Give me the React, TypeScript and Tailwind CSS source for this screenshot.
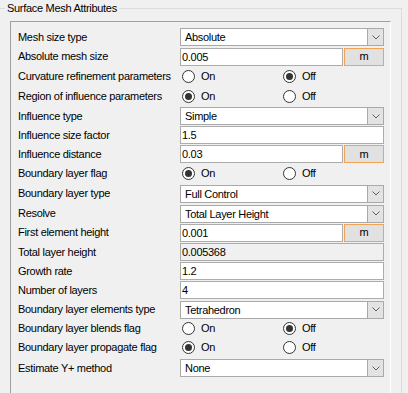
import React from 'react';

type Kind = 'select' | 'unit' | 'text' | 'readonly' | 'radio';

interface Row {
    label: string;
    kind: Kind;
    value?: string;
    on?: boolean;
    h: string;
}

const rows: Row[] = [
    { label: 'Mesh size type', kind: 'select', value: 'Absolute', h: 'h-[20px]' },
    { label: 'Absolute mesh size', kind: 'unit', value: '0.005', h: 'h-[19px]' },
    { label: 'Curvature refinement parameters', kind: 'radio', on: false, h: 'h-[20px]' },
    { label: 'Region of influence parameters', kind: 'radio', on: true, h: 'h-[20px]' },
    { label: 'Influence type', kind: 'select', value: 'Simple', h: 'h-[20px]' },
    { label: 'Influence size factor', kind: 'text', value: '1.5', h: 'h-[18px]' },
    { label: 'Influence distance', kind: 'unit', value: '0.03', h: 'h-[20px]' },
    { label: 'Boundary layer flag', kind: 'radio', on: true, h: 'h-[19px]' },
    { label: 'Boundary layer type', kind: 'select', value: 'Full Control', h: 'h-[21px]' },
    { label: 'Resolve', kind: 'select', value: 'Total Layer Height', h: 'h-[19px]' },
    { label: 'First element height', kind: 'unit', value: '0.001', h: 'h-[19px]' },
    { label: 'Total layer height', kind: 'readonly', value: '0.005368', h: 'h-[20px]' },
    { label: 'Growth rate', kind: 'text', value: '1.2', h: 'h-[18px]' },
    { label: 'Number of layers', kind: 'text', value: '4', h: 'h-[20px]' },
    { label: 'Boundary layer elements type', kind: 'select', value: 'Tetrahedron', h: 'h-[19px]' },
    { label: 'Boundary layer blends flag', kind: 'radio', on: false, h: 'h-[18px]' },
    { label: 'Boundary layer propagate flag', kind: 'radio', on: true, h: 'h-[21px]' },
    { label: 'Estimate Y+ method', kind: 'select', value: 'None', h: 'h-[20px]' },
];

const Radio: React.FC<{ checked: boolean; label: string }> = ({ checked, label }) => (
    <div className="flex items-center gap-[6px]">
        <div className="w-[13px] h-[13px] rounded-full border border-[#333333] bg-white flex items-center justify-center">
            {checked && <div className="w-[7px] h-[7px] rounded-full bg-[#333333]" />}
        </div>
        <span>{label}</span>
    </div>
);

const Select: React.FC<{ value: string }> = ({ value }) => (
    <div className="w-[204px] h-[18px] flex bg-white border border-[#a9a9a9]">
        <span className="flex-1 pl-[4px] leading-[16px]">{value}</span>
        <div className="w-[16px] h-full bg-[#e3e3e3] border-l border-[#a9a9a9] flex items-center justify-center">
            <svg width="8" height="5" viewBox="0 0 8 5">
                <polyline points="0.5,0.5 4,4 7.5,0.5" fill="none" stroke="#606060" strokeWidth="1" />
            </svg>
        </div>
    </div>
);

const Field: React.FC<{ value: string; w: string; readOnly?: boolean }> = ({ value, w, readOnly }) => (
    <div className={`${w} h-[18px] border border-[#acacac] pl-[1px] leading-[16px] ${readOnly ? 'bg-[#f0f0f0]' : 'bg-white'}`}>
        {value}
    </div>
);

const Control: React.FC<{ row: Row }> = ({ row }) => {
    switch (row.kind) {
        case 'select':
            return <Select value={row.value!} />;
        case 'unit':
            return (
                <div className="flex gap-[1px]">
                    <Field value={row.value!} w="w-[163px]" />
                    <div className="w-[40px] h-[18px] bg-[#e1e1e1] border border-[#f0a354] flex items-center justify-center leading-none">
                        m
                    </div>
                </div>
            );
        case 'text':
            return <Field value={row.value!} w="w-[204px]" />;
        case 'readonly':
            return <Field value={row.value!} w="w-[204px]" readOnly />;
        case 'radio':
            return (
                <div className="flex pl-[2px]">
                    <div className="w-[101px]">
                        <Radio checked={!!row.on} label="On" />
                    </div>
                    <Radio checked={!row.on} label="Off" />
                </div>
            );
    }
};

const App: React.FC = () => {
    return (
        <div
            className="w-[408px] h-[393px] overflow-hidden bg-[#f0f0f0] text-[11px] tracking-[-0.3px] text-black"
            style={{ fontFamily: '"Liberation Sans", Arial, sans-serif' }}
        >
            <fieldset className="w-[402px] h-[420px] border-t border-r border-[#dcdcdc]">
                <legend className="ml-[5px] px-[2px] leading-[16px]">Surface Mesh Attributes</legend>
                <div className="mt-[5px] ml-[10px] w-[381px] h-[400px] border-t border-l border-r border-t-[#a0a0a0] border-l-[#a0a0a0] border-r-white pl-[7px] pt-[5px]">
                    {rows.map((row) => (
                        <div key={row.label} className={`flex items-center ${row.h}`}>
                            <div className="w-[162px] whitespace-nowrap">{row.label}</div>
                            <Control row={row} />
                        </div>
                    ))}
                </div>
            </fieldset>
        </div>
    );
};

export default App;
